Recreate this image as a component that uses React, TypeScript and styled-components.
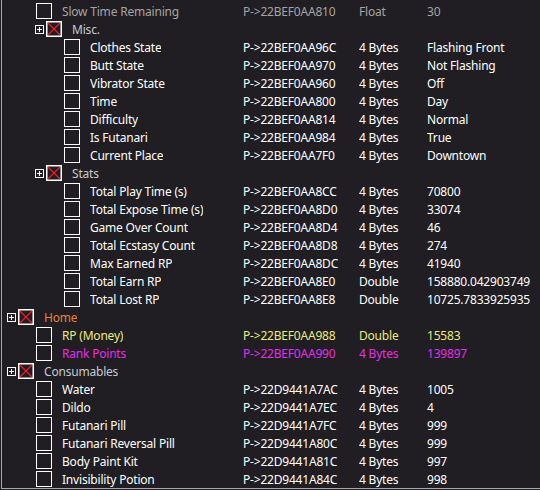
import React from 'react';
import styled, {createGlobalStyle} from 'styled-components';

const Global = createGlobalStyle`
  html, body {
    margin: 0;
    padding: 0;
    background: #201e22;
  }
  body {
    font-family: "Noto Sans", "DejaVu Sans", sans-serif;
  }
`;

type Tone = 'normal' | 'dim' | 'group' | 'home' | 'money' | 'rank';

const toneColor: Record<Tone, string> = {
  normal: '#ffffff',
  dim: '#a4a4a4',
  group: '#c6cad0',
  home: '#e8803c',
  money: '#eaea80',
  rank: '#e62ee8',
};

type Entry = {
  kind: 'item' | 'group';
  level: number;
  name: string;
  address?: string;
  type?: string;
  value?: string;
  tone?: Tone;
};

const entries: Entry[] = [
  {kind: 'item', level: 1, name: 'Slow Time Remaining', address: 'P->22BEF0AA810', type: 'Float', value: '30', tone: 'dim'},
  {kind: 'group', level: 1, name: 'Misc.'},
  {kind: 'item', level: 2, name: 'Clothes State', address: 'P->22BEF0AA96C', type: '4 Bytes', value: 'Flashing Front'},
  {kind: 'item', level: 2, name: 'Butt State', address: 'P->22BEF0AA970', type: '4 Bytes', value: 'Not Flashing'},
  {kind: 'item', level: 2, name: 'Vibrator State', address: 'P->22BEF0AA960', type: '4 Bytes', value: 'Off'},
  {kind: 'item', level: 2, name: 'Time', address: 'P->22BEF0AA800', type: '4 Bytes', value: 'Day'},
  {kind: 'item', level: 2, name: 'Difficulty', address: 'P->22BEF0AA814', type: '4 Bytes', value: 'Normal'},
  {kind: 'item', level: 2, name: 'Is Futanari', address: 'P->22BEF0AA984', type: '4 Bytes', value: 'True'},
  {kind: 'item', level: 2, name: 'Current Place', address: 'P->22BEF0AA7F0', type: '4 Bytes', value: 'Downtown'},
  {kind: 'group', level: 1, name: 'Stats'},
  {kind: 'item', level: 2, name: 'Total Play Time (s)', address: 'P->22BEF0AA8CC', type: '4 Bytes', value: '70800'},
  {kind: 'item', level: 2, name: 'Total Expose Time (s)', address: 'P->22BEF0AA8D0', type: '4 Bytes', value: '33074'},
  {kind: 'item', level: 2, name: 'Game Over Count', address: 'P->22BEF0AA8D4', type: '4 Bytes', value: '46'},
  {kind: 'item', level: 2, name: 'Total Ecstasy Count', address: 'P->22BEF0AA8D8', type: '4 Bytes', value: '274'},
  {kind: 'item', level: 2, name: 'Max Earned RP', address: 'P->22BEF0AA8DC', type: '4 Bytes', value: '41940'},
  {kind: 'item', level: 2, name: 'Total Earn RP', address: 'P->22BEF0AA8E0', type: 'Double', value: '158880.042903749'},
  {kind: 'item', level: 2, name: 'Total Lost RP', address: 'P->22BEF0AA8E8', type: 'Double', value: '10725.7833925935'},
  {kind: 'group', level: 0, name: 'Home', tone: 'home'},
  {kind: 'item', level: 1, name: 'RP (Money)', address: 'P->22BEF0AA988', type: 'Double', value: '15583', tone: 'money'},
  {kind: 'item', level: 1, name: 'Rank Points', address: 'P->22BEF0AA990', type: '4 Bytes', value: '139897', tone: 'rank'},
  {kind: 'group', level: 0, name: 'Consumables'},
  {kind: 'item', level: 1, name: 'Water', address: 'P->22D9441A7AC', type: '4 Bytes', value: '1005'},
  {kind: 'item', level: 1, name: 'Dildo', address: 'P->22D9441A7EC', type: '4 Bytes', value: '4'},
  {kind: 'item', level: 1, name: 'Futanari Pill', address: 'P->22D9441A7FC', type: '4 Bytes', value: '999'},
  {kind: 'item', level: 1, name: 'Futanari Reversal Pill', address: 'P->22D9441A80C', type: '4 Bytes', value: '999'},
  {kind: 'item', level: 1, name: 'Body Paint Kit', address: 'P->22D9441A81C', type: '4 Bytes', value: '997'},
  {kind: 'item', level: 1, name: 'Invisibility Potion', address: 'P->22D9441A84C', type: '4 Bytes', value: '998'},
];

const Window = styled.div`
  width: 540px;
  height: 490px;
  padding-left: 1px;
  box-sizing: border-box;
  background: #201e22;
  overflow: hidden;
`;

const List = styled.div`
  height: 489px;
  box-sizing: border-box;
  padding-top: 2px;
  border-left: 1px solid #a8a8a8;
  border-bottom: 1px solid #a8a8a8;
  overflow: hidden;
`;

const Row = styled.div<{$tone: Tone}>`
  display: grid;
  grid-template-columns: 241px 116px 68px 1fr;
  height: 18px;
  align-items: center;
  font-size: 12px;
  letter-spacing: -0.2px;
  color: ${p => toneColor[p.$tone]};
  white-space: nowrap;
`;

const Description = styled.div<{$pad: number}>`
  display: flex;
  align-items: center;
  padding-left: ${p => p.$pad}px;
`;

const Cell = styled.span`
  overflow: hidden;
`;

const CheckBox = styled.span`
  width: 16px;
  height: 16px;
  box-sizing: border-box;
  border: 1.5px solid #ffffff;
  margin-right: 10px;
  flex: none;
`;

const Expander = styled.span`
  width: 9px;
  height: 9px;
  margin-right: 2px;
  flex: none;
  display: flex;
`;

const GroupBox = styled.span`
  width: 16px;
  height: 16px;
  margin-right: 10px;
  flex: none;
  display: flex;
`;

const Plus = () => (
  <Expander>
    <svg width="9" height="9" viewBox="0 0 9 9">
      <rect x="0.5" y="0.5" width="8" height="8" fill="none" stroke="#fff" strokeWidth="1" />
      <path d="M2 4.5H7M4.5 2V7" stroke="#fff" strokeWidth="1" />
    </svg>
  </Expander>
);

const CrossBox = () => (
  <GroupBox>
    <svg width="16" height="16" viewBox="0 0 16 16">
      <rect x="0.75" y="0.75" width="14.5" height="14.5" fill="none" stroke="#fff" strokeWidth="1.5" />
      <path d="M2 2L14 14M14 2L2 14" stroke="#ff1a1a" strokeWidth="1.1" />
    </svg>
  </GroupBox>
);

export default function App() {
  return (
    <>
      <Global />
      <Window>
        <List>
          {entries.map((e, i) => {
            const tone: Tone = e.tone ?? (e.kind === 'group' ? 'group' : 'normal');
            const pad = e.level * 28 + (e.kind === 'group' ? 5 : 6);
            return (
              <Row key={i} $tone={tone}>
                <Description $pad={pad}>
                  {e.kind === 'group' ? (
                    <>
                      <Plus />
                      <CrossBox />
                    </>
                  ) : (
                    <CheckBox />
                  )}
                  <Cell>{e.name}</Cell>
                </Description>
                <Cell>{e.address}</Cell>
                <Cell>{e.type}</Cell>
                <Cell>{e.value}</Cell>
              </Row>
            );
          })}
        </List>
      </Window>
    </>
  );
}
